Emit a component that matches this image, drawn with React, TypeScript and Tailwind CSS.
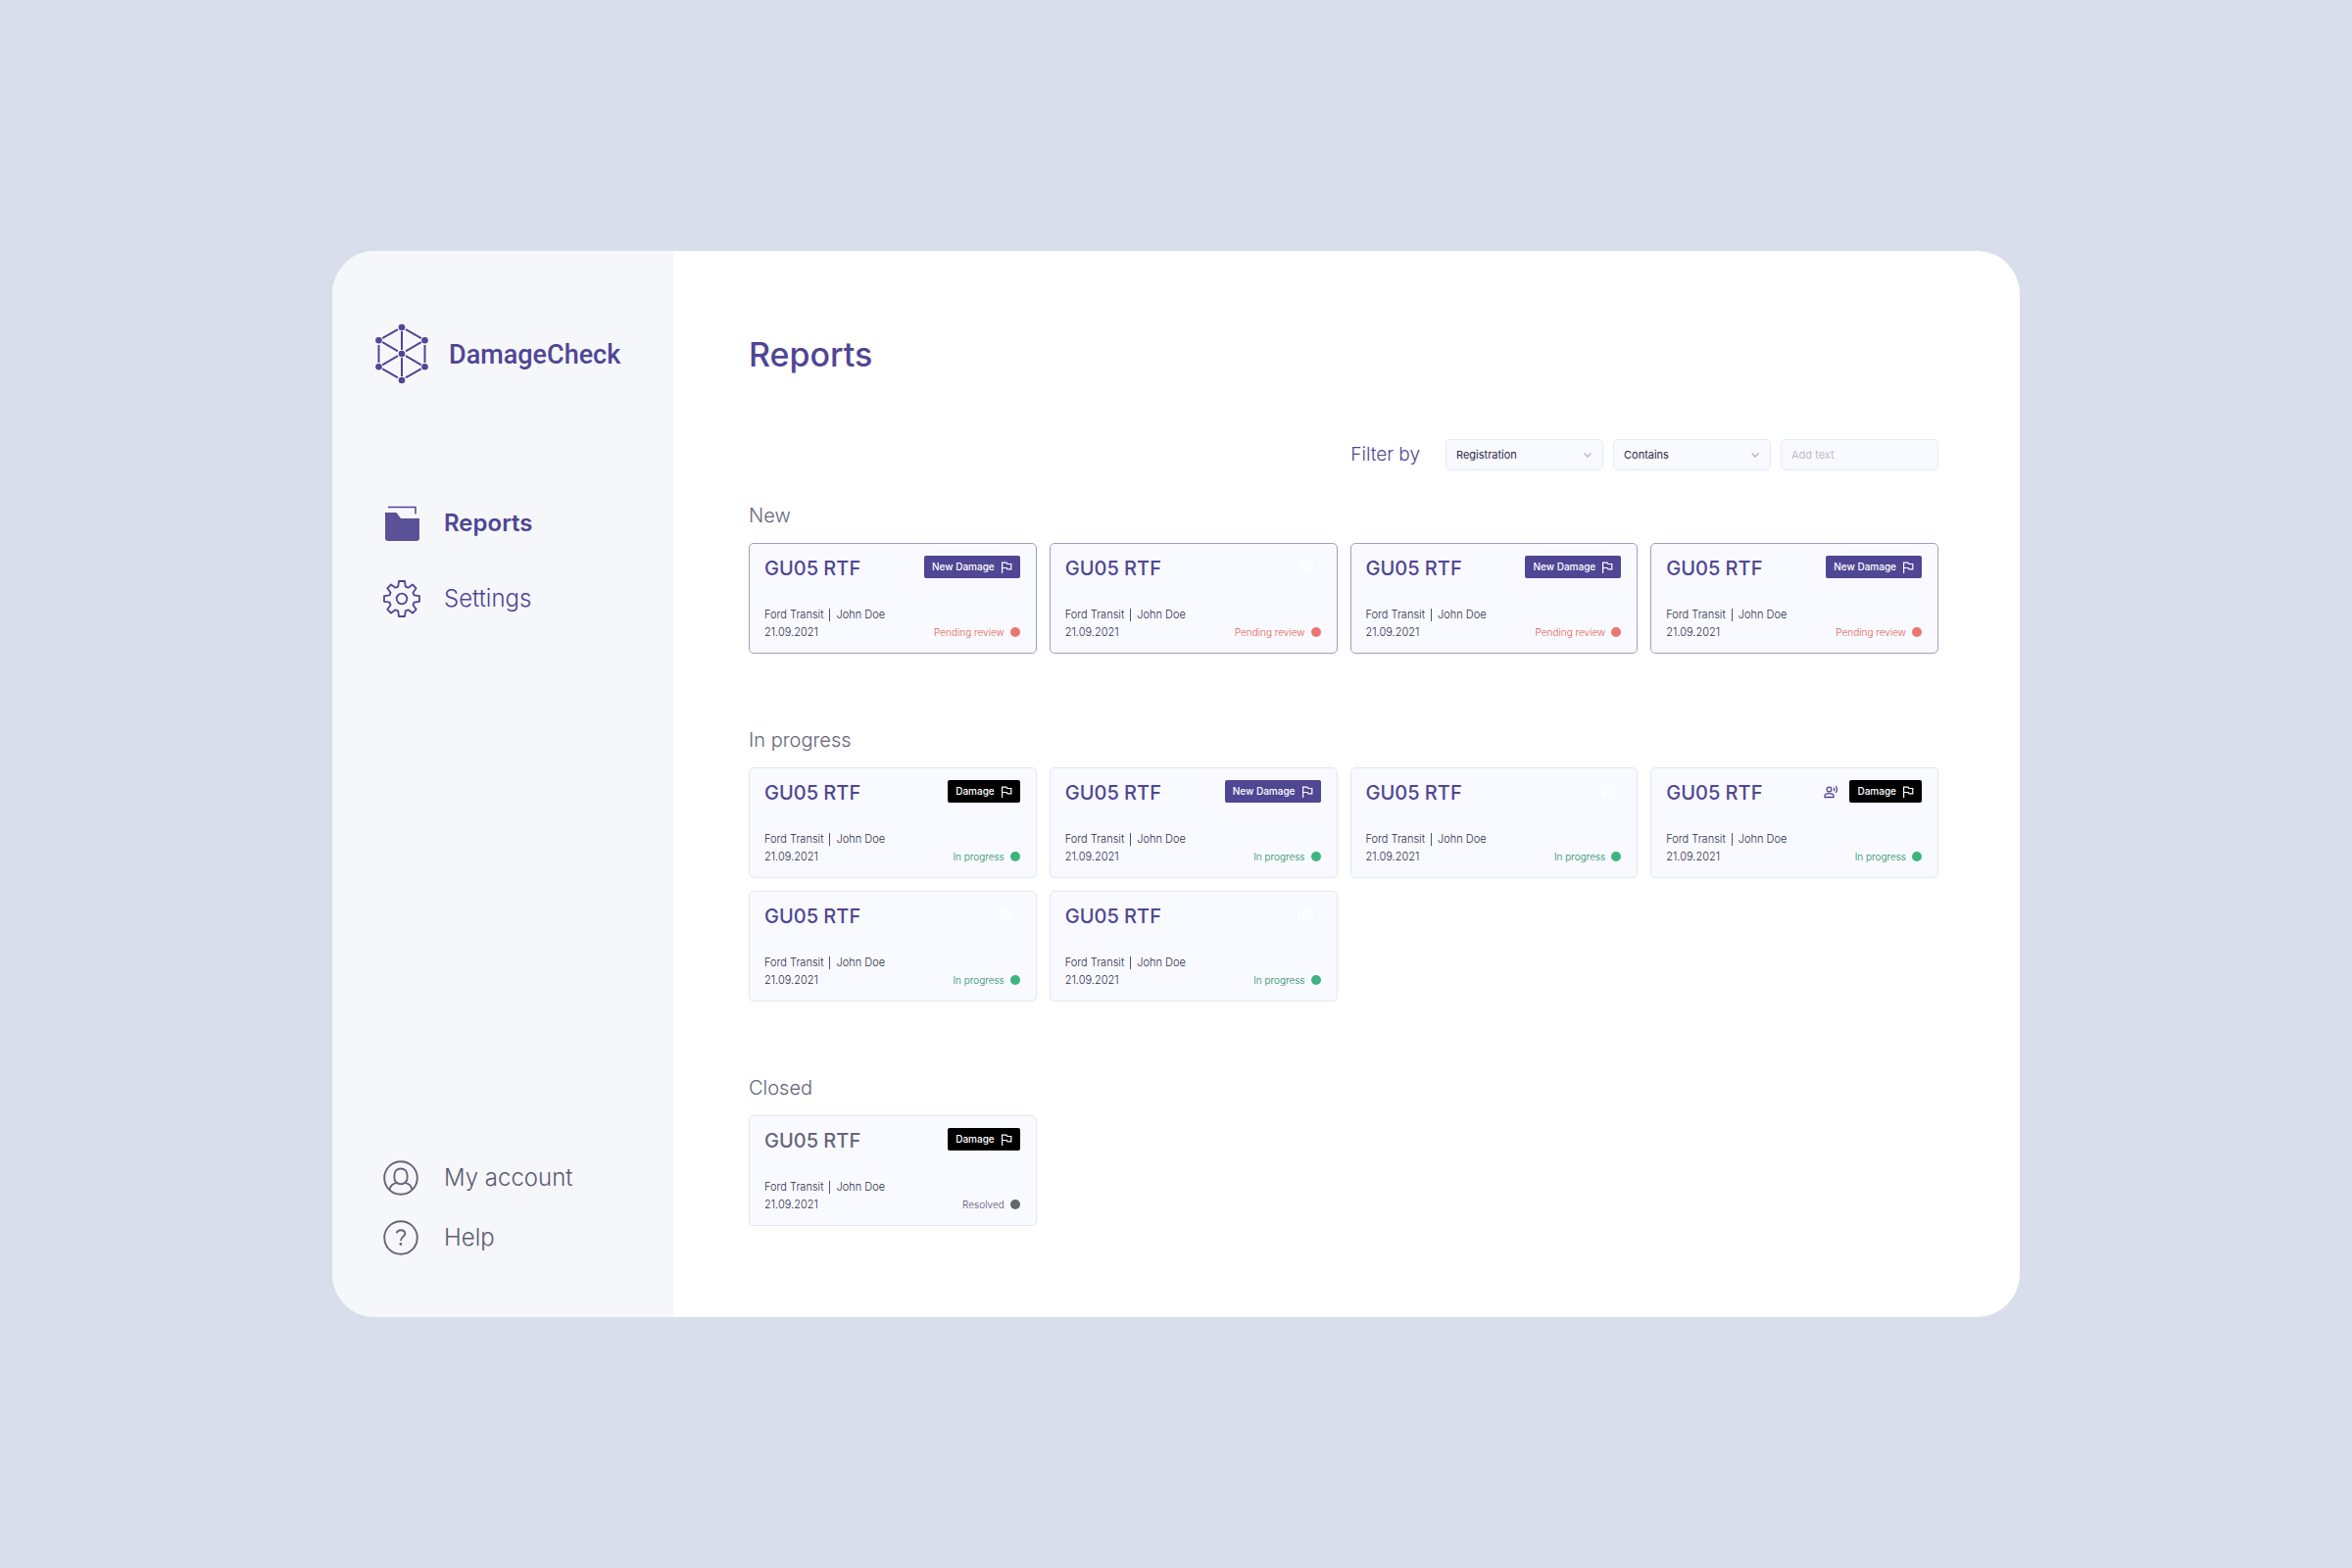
type Tag = "new" | "damage" | "none";
type Status = "Pending review" | "In progress" | "Resolved";

interface Report {
  id: number;
  tag: Tag;
  voice?: boolean;
}

const newReports: Report[] = [
  { id: 1, tag: "new" },
  { id: 2, tag: "none" },
  { id: 3, tag: "new" },
  { id: 4, tag: "new" },
];

const inProgressReports: Report[] = [
  { id: 5, tag: "damage" },
  { id: 6, tag: "new" },
  { id: 7, tag: "none" },
  { id: 8, tag: "damage", voice: true },
  { id: 9, tag: "none" },
  { id: 10, tag: "none" },
];

const closedReports: Report[] = [{ id: 11, tag: "damage" }];

const statusText: Record<Status, string> = {
  "Pending review": "text-[#e65a50]",
  "In progress": "text-[#148a5b]",
  Resolved: "text-[#4f4d6a]",
};

const statusDot: Record<Status, string> = {
  "Pending review": "bg-[#ea776f]",
  "In progress": "bg-[#3eb480]",
  Resolved: "bg-[#66666f]",
};

const tagStyle: Record<Tag, string> = {
  new: "bg-[#4f4694]",
  damage: "bg-black",
  none: "bg-transparent",
};

const tagLabel: Record<Tag, string> = {
  new: "New Damage",
  damage: "Damage",
  none: "",
};

function Logo() {
  return (
    <svg width="54" height="62" viewBox="0 0 54 62" fill="none" stroke="#4f4694" strokeWidth="2" aria-hidden="true">
      <path d="M7.2 15.2 23 6.2M31 6.2l15.8 9M50.500 22v18M46.800 46.400 31 55.400M23 55.400 7.200 46.400M3.500 40V22M27 8v19M27 35v19M7.200 19.200 23 28.400M31 28.400l15.800-9.200M23 33.200 7.200 42.400M31 33.200l15.800 9.200" />
      <g fill="#4f4694" stroke="none">
        <circle cx="27" cy="4" r="3.300" />
        <circle cx="3.500" cy="17.300" r="3.300" />
        <circle cx="50.500" cy="17.300" r="3.300" />
        <circle cx="27" cy="31" r="3.300" />
        <circle cx="3.500" cy="44.300" r="3.300" />
        <circle cx="50.500" cy="44.300" r="3.300" />
        <circle cx="27" cy="58" r="3.300" />
      </g>
    </svg>
  );
}

function FolderIcon() {
  return (
    <svg width="38" height="38" viewBox="0 0 38 38" fill="none" aria-hidden="true">
      <path d="M5 2.500h28v7" stroke="#4f4694" strokeWidth="1.500" />
      <path d="M2 8h11.500L18 14h19v20a3 3 0 0 1-3 3H5a3 3 0 0 1-3-3z" fill="#5a5298" />
    </svg>
  );
}

function GearIcon() {
  return (
    <svg width="38" height="38" viewBox="0 0 38 38" fill="none" stroke="#4f4694" strokeWidth="1.800" strokeLinejoin="round" aria-hidden="true">
      <path d="M16 1h6l.8 5.600a13 13 0 0 1 2.700 1.100L30 4.500 33.700 8.300l-3.300 4.400q.7 1.300 1 2.700l5.600.8v5.600l-5.600.8q-.3 1.400-1 2.700l3.300 4.500-3.700 3.800-4.500-3.300q-1.300.7-2.700 1.100L22 37h-6l-.8-5.600q-1.400-.4-2.700-1.100L8 33.600 4.300 29.800l3.300-4.500q-.7-1.300-1-2.700L1 21.800v-5.600l5.600-.8q.3-1.400 1-2.700L4.300 8.300 8 4.500l4.500 3.200q1.300-.7 2.700-1.100z" />
      <circle cx="19" cy="19" r="5.300" />
    </svg>
  );
}

function AccountIcon() {
  return (
    <svg width="36" height="36" viewBox="0 0 36 36" fill="none" stroke="#66657a" strokeWidth="1.900" aria-hidden="true">
      <circle cx="18" cy="18" r="16.800" />
      <path d="M18 8.500c-4 0-6.600 2.800-6.600 7.200v2.200c0 3.200 2.600 6.300 6.600 6.300s6.600-3.100 6.600-6.300v-2.200c0-4.400-2.600-7.200-6.600-7.200zM13.400 22.800c-3.700 1-6.200 3-6.800 7M22.600 22.800c3.700 1 6.200 3 6.800 7" />
    </svg>
  );
}

function HelpIcon() {
  return (
    <svg width="36" height="36" viewBox="0 0 36 36" fill="none" stroke="#66657a" strokeWidth="1.900" aria-hidden="true">
      <circle cx="18" cy="18" r="16.800" />
      <path d="M13.800 13.200c.5-1.900 2-3 4.200-3 2.500 0 4.300 1.400 4.300 3.600 0 3.300-4.400 3.300-4.400 7.100" />
      <circle cx="17.900" cy="24.500" r="1.400" fill="#66657a" stroke="none" />
    </svg>
  );
}

function FlagIcon() {
  return (
    <svg width="12" height="12" viewBox="0 0 12 12" fill="none" stroke="white" strokeWidth="1.200" aria-hidden="true">
      <path d="M1.600 12V1.200H6l.8 1.300h4v5.300H7l-.8-1.300H1.600" />
    </svg>
  );
}

function VoiceIcon() {
  return (
    <svg width="15" height="14" viewBox="0 0 15 14" fill="none" stroke="#4f4694" strokeWidth="1.300" aria-label="Voice note">
      <circle cx="5.500" cy="4.500" r="2.400" />
      <path d="M1 12.500V11c0-1.500 2.500-2.400 4.500-2.400s4.500.9 4.500 2.400v1.500zM10.200 2.700q1 1.800 0 3.600M12.300 1q2.300 3.500 0 7" />
    </svg>
  );
}

function Card({ report, status }: { report: Report; status: Status }) {
  const border = status === "Pending review" ? "border-[#a29dc4]" : "border-[#e4e5ef]";
  const title = status === "Resolved" ? "text-[#66657a]" : "text-[#4f4694]";

  return (
    <article className={`flex h-[113px] flex-col justify-between rounded-[5px] border bg-[#f9faff] py-3 pr-4 pl-[15px] ${border}`}>
      <div className="flex items-start">
        <h3 className={`text-[20px] leading-[26px] font-medium ${title}`}>GU05 RTF</h3>
        <div className="ml-auto flex items-center gap-[11px]">
          {report.voice && <VoiceIcon />}
          <span className={`flex h-[23px] items-center gap-[6px] rounded-[2px] px-2 text-[10px] font-medium text-white ${tagStyle[report.tag]}`}>
            {tagLabel[report.tag]}
            <FlagIcon />
          </span>
        </div>
      </div>
      <div className="flex items-end justify-between text-[11px] leading-[18px] font-light text-[#2f2d4c]">
        <div>
          <p className="flex items-center gap-[6px]">
            Ford Transit
            <span className="h-[13px] w-px bg-[#55536f]" />
            John Doe
          </p>
          <p>21.09.2021</p>
        </div>
        <p className={`flex items-center gap-[6px] text-[10px] ${statusText[status]}`}>
          {status}
          <span className={`size-[10px] rounded-full ${statusDot[status]}`} />
        </p>
      </div>
    </article>
  );
}

function Section({ title, reports, status }: { title: string; reports: Report[]; status: Status }) {
  return (
    <section>
      <h2 className="mb-[14px] text-[20px] leading-7 font-light text-[#66657a]">{title}</h2>
      <div className="grid grid-cols-4 gap-[13px]">
        {reports.map((report) => (
          <Card key={report.id} report={report} status={status} />
        ))}
      </div>
    </section>
  );
}

function FilterSelect({ label, options }: { label: string; options: string[] }) {
  return (
    <div className="relative w-[161px]">
      <select
        aria-label={label}
        className="h-8 w-full appearance-none rounded-[5px] border border-[#e8e9f3] bg-[#f9faff] px-[10px] text-[11px] text-[#2c2a45]"
      >
        {options.map((option) => (
          <option key={option}>{option}</option>
        ))}
      </select>
      <svg className="pointer-events-none absolute top-3 right-3 size-2" viewBox="0 0 8 8" fill="none" stroke="#b3b0cf" strokeWidth="1.300">
        <path d="m.5 2.500 3.500 3.500 3.500-3.500" />
      </svg>
    </div>
  );
}

function Filters() {
  return (
    <form className="flex items-center justify-end">
      <span className="mr-[26px] text-[19px] leading-7 font-light text-[#4f4694]">Filter by</span>
      <div className="flex gap-[10px]">
        <FilterSelect label="Field" options={["Registration", "Driver", "Vehicle"]} />
        <FilterSelect label="Condition" options={["Contains", "Equals"]} />
        <input
          type="text"
          aria-label="Filter text"
          placeholder="Add text"
          className="h-8 w-[161px] rounded-[5px] border border-[#e8e9f3] bg-[#f9faff] px-[10px] text-[11px] placeholder:text-[#bcbace]"
        />
      </div>
    </form>
  );
}

function Sidebar() {
  return (
    <aside className="flex w-[348px] shrink-0 flex-col bg-[#f6f7fb] pt-[74px] pr-6 pb-[63px] pl-11">
      <a href="#home" className="flex items-center gap-[21px] font-[Roboto,sans-serif] text-[27px] leading-8 font-medium text-[#4f4694]">
        <Logo />
        <span className="pt-[2px]">DamageCheck</span>
      </a>
      <nav className="mt-[123px] flex flex-col gap-[39px] pl-2 text-[24px] leading-[38px] text-[#4f4694]">
        <a href="#reports" className="flex items-center gap-6 font-semibold">
          <FolderIcon />
          Reports
        </a>
        <a href="#settings" className="flex items-center gap-6 font-light">
          <GearIcon />
          Settings
        </a>
      </nav>
      <nav className="mt-auto flex flex-col gap-[25px] pl-2 text-[24px] leading-9 font-light text-[#5c5b71]">
        <a href="#account" className="flex items-center gap-[26px]">
          <AccountIcon />
          My account
        </a>
        <a href="#help" className="flex items-center gap-[26px]">
          <HelpIcon />
          Help
        </a>
      </nav>
    </aside>
  );
}

export default function App() {
  return (
    <div className="flex min-h-screen items-center justify-center bg-[#d8deeb] font-[Inter,sans-serif]">
      <div className="flex w-full max-w-[1722px] overflow-hidden rounded-[44px] bg-white">
        <Sidebar />
        <main className="flex-1 pt-[84px] pr-[83px] pb-[93px] pl-[77px]">
          <h1 className="text-[34px] leading-[44px] font-medium text-[#4f4694]">Reports</h1>
          <div className="mt-16">
            <Filters />
          </div>
          <div className="mt-8 flex flex-col gap-[74px]">
            <Section title="New" reports={newReports} status="Pending review" />
            <Section title="In progress" reports={inProgressReports} status="In progress" />
            <Section title="Closed" reports={closedReports} status="Resolved" />
          </div>
        </main>
      </div>
    </div>
  );
}
